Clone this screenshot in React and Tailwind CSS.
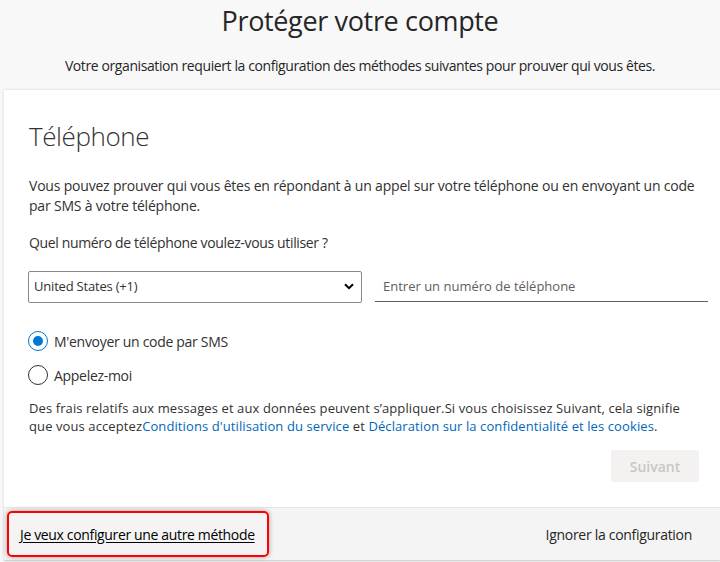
import { useState } from "react";

const font = { fontFamily: '"Open Sans", "Noto Sans", sans-serif' };

const Radio = ({ checked, label, onClick }) => (
  <button type="button" onClick={onClick} className="flex items-center gap-[6px] h-[20px] text-left">
    <span
      className={`flex items-center justify-center w-[20px] h-[20px] rounded-full border ${
        checked ? "border-[#0078d4]" : "border-[#323130]"
      }`}
    >
      {checked && <span className="w-[10px] h-[10px] rounded-full bg-[#0078d4]" />}
    </span>
    <span className="text-[14px] tracking-[-0.3px] text-[#323130]">{label}</span>
  </button>
);

export default function App() {
  const [method, setMethod] = useState("sms");
  const [phone, setPhone] = useState("");

  return (
    <div className="w-[720px] h-[562px] bg-[#f8f8f8] overflow-hidden text-[#323130]" style={font}>
      <div className="h-[90px] flex flex-col items-center">
        <h1 className="mt-[3px] text-[27px] leading-[36px] tracking-[-0.35px] text-[#262626]">
          Protéger votre compte
        </h1>
        <p className="mt-[17px] text-[14px] leading-[20px] tracking-[-0.4px] text-[#262626]">
          Votre organisation requiert la configuration des méthodes suivantes pour prouver qui vous êtes.
        </p>
      </div>

      <div className="ml-[4px] h-[471px] bg-white shadow-[0_0_3px_rgba(0,0,0,0.15)] flex flex-col">
        <div className="flex-1 pl-[24px] pr-[12px]">
          <h2 className="mt-[28px] ml-[1px] text-[26px] leading-[36px] font-light tracking-[-0.4px] text-[#333]">
            Téléphone
          </h2>

          <p className="mt-[22px] ml-[1px] text-[14px] leading-[20px] tracking-[-0.2px]">
            Vous pouvez prouver qui vous êtes en répondant à un appel sur votre téléphone ou en envoyant un code
            <br />
            par SMS à votre téléphone.
          </p>

          <p className="mt-[17px] ml-[1px] text-[14px] leading-[20px] tracking-[-0.35px]">
            Quel numéro de téléphone voulez-vous utiliser ?
          </p>

          <div className="mt-[18px] flex gap-[13px]">
            <div className="relative w-[334px] h-[32px] shrink-0">
              <select
                className="w-full h-full appearance-none border border-[#8a8886] rounded-[2px] pl-[5px] pr-[28px] text-[13px] tracking-[-0.2px] text-[#323130] bg-white"
                defaultValue="us"
              >
                <option value="us">United States (+1)</option>
                <option value="fr">France (+33)</option>
                <option value="ca">Canada (+1)</option>
              </select>
              <svg
                className="absolute right-[8px] top-[12px] pointer-events-none"
                width="10"
                height="7"
                viewBox="0 0 10 7"
              >
                <path d="M1 1.2 L5 5.2 L9 1.2" fill="none" stroke="#000" strokeWidth="2" />
              </svg>
            </div>
            <input
              value={phone}
              onChange={(e) => setPhone(e.target.value)}
              placeholder="Entrer un numéro de téléphone"
              className="w-[333px] h-[31px] shrink-0 border-b border-[#605e5c] px-[8px] text-[13px] placeholder:text-[#605e5c] outline-none"
            />
          </div>

          <div className="mt-[28px] flex flex-col gap-[14px]">
            <Radio checked={method === "sms"} label="M'envoyer un code par SMS" onClick={() => setMethod("sms")} />
            <Radio checked={method === "call"} label="Appelez-moi" onClick={() => setMethod("call")} />
          </div>

          <div className="mt-[14px] ml-[1px] text-[13px] leading-[18px] tracking-[0.1px]">
            <p>
              Des frais relatifs aux messages et aux données peuvent s’appliquer.Si vous choisissez Suivant, cela
              signifie
            </p>
            <p>
              <span>que vous acceptez</span>
              <a href="#" className="text-[#0067b8]">Conditions d'utilisation du service</a>
              <span> et </span>
              <a href="#" className="text-[#0067b8]">Déclaration sur la confidentialité et les cookies</a>
              <span>.</span>
            </p>
          </div>

          <div className="mt-[15px] flex justify-end mr-[9px]">
            <button
              type="button"
              disabled
              className="w-[88px] h-[32px] rounded-[2px] bg-[#f3f2f1] text-[#c8c6c4] text-[14px] font-semibold"
            >
              Suivant
            </button>
          </div>
        </div>

        <div className="h-[54px] bg-[#f4f4f4] border-t border-[#e6e6e6] border-b border-b-[#d4d4d4] flex items-center justify-between pl-[3px] pr-[28px]">
          <div className="w-[262px] h-[46px] pl-[11px] flex items-center rounded-[5px] border-2 border-[#ff0000] shadow-[0_0_5px_rgba(0,0,0,0.35)]">
            <a href="#" className="whitespace-nowrap text-[14px] tracking-[-0.35px] text-black underline underline-offset-2">
              Je veux configurer une autre méthode
            </a>
          </div>
          <a href="#" className="text-[14px] tracking-[-0.3px] text-[#262626]">
            Ignorer la configuration
          </a>
        </div>
      </div>
    </div>
  );
}
